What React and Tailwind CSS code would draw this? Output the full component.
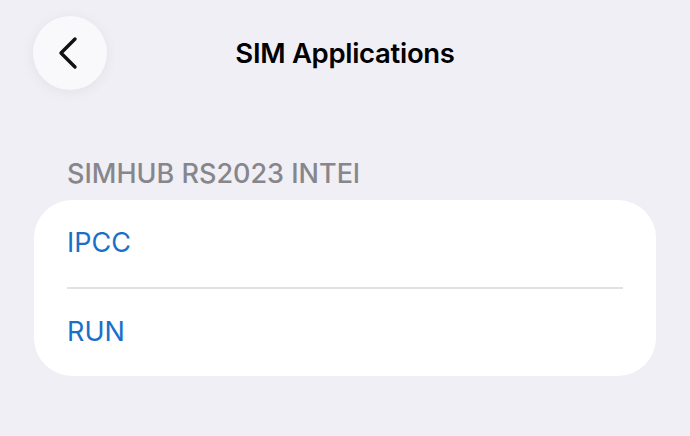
export default function App() {
  return (
    <div className="w-[690px] h-[436px] bg-[#f0eff5] overflow-hidden" style={{ fontFamily: "Inter, 'Liberation Sans', sans-serif" }}>
      <div className="relative h-[106px] flex items-center justify-center">
        <div className="absolute left-[33px] top-[16px] w-[74px] h-[74px] rounded-full bg-[#f9f9fc] shadow-[0_2px_14px_rgba(0,0,0,0.06)] flex items-center justify-center">
          <svg width="22" height="34" viewBox="0 0 22 34" fill="none" className="-ml-[4px]">
            <path d="M18 3 L4 17 L18 31" stroke="#111" strokeWidth="3.4" strokeLinecap="round" strokeLinejoin="round" />
          </svg>
        </div>
        <div className="pt-[2px] text-[27.5px] font-semibold text-black tracking-[-0.3px]">SIM Applications</div>
      </div>
      <div className="pl-[67px] pt-[52px] text-[27px] text-[#86868b] font-medium leading-[32px]">SIMHUB RS2023 INTEl</div>
      <div className="mx-[34px] mt-[10px] bg-white rounded-[38px]">
        <div className="h-[87px] flex items-center pl-[33px] text-[27px] text-[#1b6fc8]">IPCC</div>
        <div className="ml-[33px] mr-[33px] h-[2px] bg-[#e2e2e6]" />
        <div className="h-[87px] flex items-center pl-[33px] text-[27px] text-[#1b6fc8]">RUN</div>
      </div>
    </div>
  );
}
